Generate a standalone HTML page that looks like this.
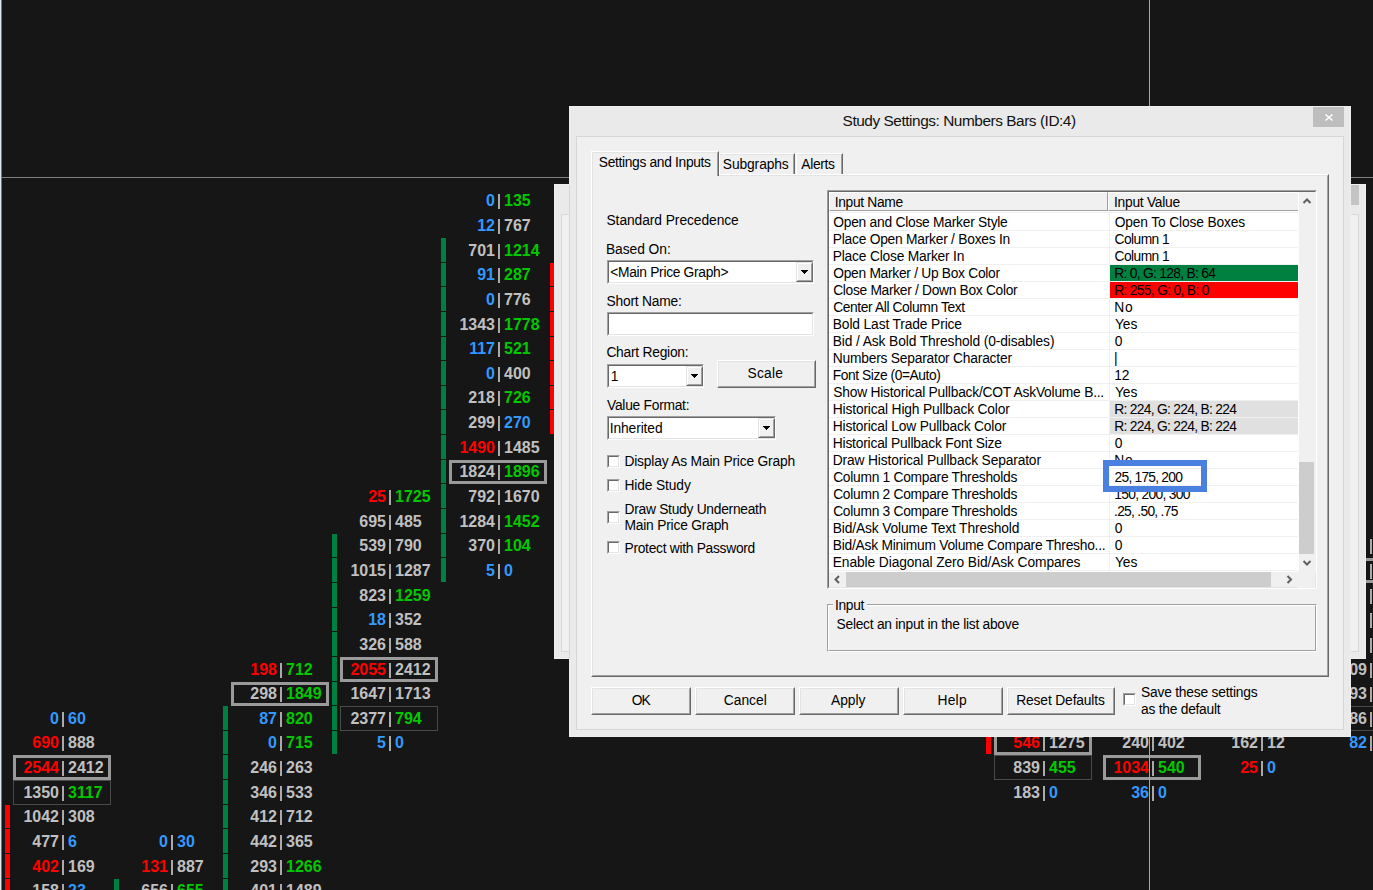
<!DOCTYPE html><html><head><meta charset="utf-8"><style>
*{margin:0;padding:0;box-sizing:border-box}
html,body{width:1373px;height:890px;overflow:hidden;background:#161616}
body{position:relative;font-family:"Liberation Sans",sans-serif}
div{position:absolute}
.t{white-space:pre;line-height:16px}
.n{font:bold 16px/16px "Liberation Sans",sans-serif;white-space:pre}
.L{text-align:right;width:60px}
.g{color:#c0c0c0}.r{color:#ff0000}.b{color:#3399ff}.G{color:#00c800}
.d{font-size:13px;color:#000;line-height:16px;white-space:pre}
</style></head><body>
<div style="left:0px;top:0px;width:1px;height:890px;background:#dfe9f3"></div>
<div style="left:1px;top:0px;width:1px;height:890px;background:#c06010"></div>
<div style="left:2px;top:177px;width:1371px;height:1px;background:#808080"></div>
<div style="left:5px;top:805px;width:5px;height:23px;background:#ff0000"></div>
<div style="left:5px;top:829px;width:5px;height:24px;background:#ff0000"></div>
<div style="left:5px;top:854px;width:5px;height:24px;background:#ff0000"></div>
<div style="left:5px;top:879px;width:5px;height:23px;background:#ff0000"></div>
<div style="left:114px;top:879px;width:5px;height:23px;background:#008040"></div>
<div style="left:223px;top:706px;width:5px;height:24px;background:#008040"></div>
<div style="left:223px;top:731px;width:5px;height:23px;background:#008040"></div>
<div style="left:223px;top:755px;width:5px;height:24px;background:#008040"></div>
<div style="left:223px;top:780px;width:5px;height:24px;background:#008040"></div>
<div style="left:223px;top:805px;width:5px;height:23px;background:#008040"></div>
<div style="left:223px;top:829px;width:5px;height:24px;background:#008040"></div>
<div style="left:223px;top:854px;width:5px;height:24px;background:#008040"></div>
<div style="left:223px;top:879px;width:5px;height:23px;background:#008040"></div>
<div style="left:332px;top:534px;width:5px;height:23px;background:#008040"></div>
<div style="left:332px;top:558px;width:5px;height:24px;background:#008040"></div>
<div style="left:332px;top:583px;width:5px;height:24px;background:#008040"></div>
<div style="left:332px;top:608px;width:5px;height:23px;background:#008040"></div>
<div style="left:332px;top:632px;width:5px;height:24px;background:#008040"></div>
<div style="left:332px;top:657px;width:5px;height:24px;background:#008040"></div>
<div style="left:332px;top:682px;width:5px;height:23px;background:#008040"></div>
<div style="left:332px;top:706px;width:5px;height:24px;background:#008040"></div>
<div style="left:332px;top:731px;width:5px;height:23px;background:#008040"></div>
<div style="left:441px;top:238px;width:5px;height:24px;background:#008040"></div>
<div style="left:441px;top:263px;width:5px;height:23px;background:#008040"></div>
<div style="left:441px;top:287px;width:5px;height:24px;background:#008040"></div>
<div style="left:441px;top:312px;width:5px;height:24px;background:#008040"></div>
<div style="left:441px;top:337px;width:5px;height:23px;background:#008040"></div>
<div style="left:441px;top:361px;width:5px;height:24px;background:#008040"></div>
<div style="left:441px;top:386px;width:5px;height:23px;background:#008040"></div>
<div style="left:441px;top:410px;width:5px;height:24px;background:#008040"></div>
<div style="left:441px;top:435px;width:5px;height:24px;background:#008040"></div>
<div style="left:441px;top:460px;width:5px;height:23px;background:#008040"></div>
<div style="left:441px;top:484px;width:5px;height:24px;background:#008040"></div>
<div style="left:441px;top:509px;width:5px;height:24px;background:#008040"></div>
<div style="left:441px;top:534px;width:5px;height:23px;background:#008040"></div>
<div style="left:441px;top:558px;width:5px;height:24px;background:#008040"></div>
<div style="left:550px;top:263px;width:5px;height:23px;background:#ff0000"></div>
<div style="left:550px;top:287px;width:5px;height:24px;background:#ff0000"></div>
<div style="left:550px;top:312px;width:5px;height:24px;background:#ff0000"></div>
<div style="left:550px;top:337px;width:5px;height:23px;background:#ff0000"></div>
<div style="left:550px;top:361px;width:5px;height:24px;background:#ff0000"></div>
<div style="left:550px;top:386px;width:5px;height:23px;background:#ff0000"></div>
<div style="left:550px;top:410px;width:5px;height:24px;background:#ff0000"></div>
<div style="left:986px;top:632px;width:5px;height:24px;background:#ff0000"></div>
<div style="left:986px;top:657px;width:5px;height:24px;background:#ff0000"></div>
<div style="left:986px;top:682px;width:5px;height:23px;background:#ff0000"></div>
<div style="left:986px;top:706px;width:5px;height:24px;background:#ff0000"></div>
<div style="left:986px;top:731px;width:5px;height:23px;background:#ff0000"></div>
<div style="left:13px;top:780px;width:98px;height:25px;border:1px solid #4a4a4a"></div>
<div style="left:340px;top:706px;width:98px;height:25px;border:1px solid #4a4a4a"></div>
<div style="left:994px;top:755px;width:98px;height:25px;border:1px solid #4a4a4a"></div>
<div style="left:1321px;top:706px;width:98px;height:25px;border:1px solid #4a4a4a"></div>
<div style="left:13px;top:755px;width:98px;height:25px;border:3px solid #9a9a9a"></div>
<div style="left:231px;top:682px;width:98px;height:24px;border:3px solid #9a9a9a"></div>
<div style="left:340px;top:657px;width:98px;height:25px;border:3px solid #9a9a9a"></div>
<div style="left:449px;top:460px;width:98px;height:24px;border:3px solid #9a9a9a"></div>
<div style="left:994px;top:731px;width:98px;height:24px;border:3px solid #9a9a9a"></div>
<div style="left:1103px;top:755px;width:98px;height:25px;border:3px solid #9a9a9a"></div>
<div style="left:1321px;top:558px;width:98px;height:25px;border:3px solid #9a9a9a"></div>
<div class="n L b" style="left:-1px;top:711px">0</div>
<div style="left:62px;top:712px;width:2px;height:15px;background:#aaaaaa"></div>
<div class="n b" style="left:68px;top:711px">60</div>
<div class="n L r" style="left:-1px;top:735px">690</div>
<div style="left:62px;top:736px;width:2px;height:15px;background:#aaaaaa"></div>
<div class="n g" style="left:68px;top:735px">888</div>
<div class="n L r" style="left:-1px;top:760px">2544</div>
<div style="left:62px;top:761px;width:2px;height:15px;background:#aaaaaa"></div>
<div class="n g" style="left:68px;top:760px">2412</div>
<div class="n L g" style="left:-1px;top:785px">1350</div>
<div style="left:62px;top:786px;width:2px;height:15px;background:#aaaaaa"></div>
<div class="n G" style="left:68px;top:785px">3117</div>
<div class="n L g" style="left:-1px;top:809px">1042</div>
<div style="left:62px;top:810px;width:2px;height:15px;background:#aaaaaa"></div>
<div class="n g" style="left:68px;top:809px">308</div>
<div class="n L g" style="left:-1px;top:834px">477</div>
<div style="left:62px;top:835px;width:2px;height:15px;background:#aaaaaa"></div>
<div class="n b" style="left:68px;top:834px">6</div>
<div class="n L r" style="left:-1px;top:859px">402</div>
<div style="left:62px;top:860px;width:2px;height:15px;background:#aaaaaa"></div>
<div class="n g" style="left:68px;top:859px">169</div>
<div class="n L g" style="left:-1px;top:883px">158</div>
<div style="left:62px;top:884px;width:2px;height:15px;background:#aaaaaa"></div>
<div class="n b" style="left:68px;top:883px">23</div>
<div class="n L b" style="left:108px;top:834px">0</div>
<div style="left:171px;top:835px;width:2px;height:15px;background:#aaaaaa"></div>
<div class="n b" style="left:177px;top:834px">30</div>
<div class="n L r" style="left:108px;top:859px">131</div>
<div style="left:171px;top:860px;width:2px;height:15px;background:#aaaaaa"></div>
<div class="n g" style="left:177px;top:859px">887</div>
<div class="n L g" style="left:108px;top:883px">656</div>
<div style="left:171px;top:884px;width:2px;height:15px;background:#aaaaaa"></div>
<div class="n G" style="left:177px;top:883px">655</div>
<div class="n L r" style="left:217px;top:662px">198</div>
<div style="left:280px;top:663px;width:2px;height:15px;background:#aaaaaa"></div>
<div class="n G" style="left:286px;top:662px">712</div>
<div class="n L g" style="left:217px;top:686px">298</div>
<div style="left:280px;top:687px;width:2px;height:15px;background:#aaaaaa"></div>
<div class="n G" style="left:286px;top:686px">1849</div>
<div class="n L b" style="left:217px;top:711px">87</div>
<div style="left:280px;top:712px;width:2px;height:15px;background:#aaaaaa"></div>
<div class="n G" style="left:286px;top:711px">820</div>
<div class="n L b" style="left:217px;top:735px">0</div>
<div style="left:280px;top:736px;width:2px;height:15px;background:#aaaaaa"></div>
<div class="n G" style="left:286px;top:735px">715</div>
<div class="n L g" style="left:217px;top:760px">246</div>
<div style="left:280px;top:761px;width:2px;height:15px;background:#aaaaaa"></div>
<div class="n g" style="left:286px;top:760px">263</div>
<div class="n L g" style="left:217px;top:785px">346</div>
<div style="left:280px;top:786px;width:2px;height:15px;background:#aaaaaa"></div>
<div class="n g" style="left:286px;top:785px">533</div>
<div class="n L g" style="left:217px;top:809px">412</div>
<div style="left:280px;top:810px;width:2px;height:15px;background:#aaaaaa"></div>
<div class="n g" style="left:286px;top:809px">712</div>
<div class="n L g" style="left:217px;top:834px">442</div>
<div style="left:280px;top:835px;width:2px;height:15px;background:#aaaaaa"></div>
<div class="n g" style="left:286px;top:834px">365</div>
<div class="n L g" style="left:217px;top:859px">293</div>
<div style="left:280px;top:860px;width:2px;height:15px;background:#aaaaaa"></div>
<div class="n G" style="left:286px;top:859px">1266</div>
<div class="n L g" style="left:217px;top:883px">401</div>
<div style="left:280px;top:884px;width:2px;height:15px;background:#aaaaaa"></div>
<div class="n g" style="left:286px;top:883px">1489</div>
<div class="n L r" style="left:326px;top:489px">25</div>
<div style="left:389px;top:490px;width:2px;height:15px;background:#aaaaaa"></div>
<div class="n G" style="left:395px;top:489px">1725</div>
<div class="n L g" style="left:326px;top:514px">695</div>
<div style="left:389px;top:515px;width:2px;height:15px;background:#aaaaaa"></div>
<div class="n g" style="left:395px;top:514px">485</div>
<div class="n L g" style="left:326px;top:538px">539</div>
<div style="left:389px;top:539px;width:2px;height:15px;background:#aaaaaa"></div>
<div class="n g" style="left:395px;top:538px">790</div>
<div class="n L g" style="left:326px;top:563px">1015</div>
<div style="left:389px;top:564px;width:2px;height:15px;background:#aaaaaa"></div>
<div class="n g" style="left:395px;top:563px">1287</div>
<div class="n L g" style="left:326px;top:588px">823</div>
<div style="left:389px;top:589px;width:2px;height:15px;background:#aaaaaa"></div>
<div class="n G" style="left:395px;top:588px">1259</div>
<div class="n L b" style="left:326px;top:612px">18</div>
<div style="left:389px;top:613px;width:2px;height:15px;background:#aaaaaa"></div>
<div class="n g" style="left:395px;top:612px">352</div>
<div class="n L g" style="left:326px;top:637px">326</div>
<div style="left:389px;top:638px;width:2px;height:15px;background:#aaaaaa"></div>
<div class="n g" style="left:395px;top:637px">588</div>
<div class="n L r" style="left:326px;top:662px">2055</div>
<div style="left:389px;top:663px;width:2px;height:15px;background:#aaaaaa"></div>
<div class="n g" style="left:395px;top:662px">2412</div>
<div class="n L g" style="left:326px;top:686px">1647</div>
<div style="left:389px;top:687px;width:2px;height:15px;background:#aaaaaa"></div>
<div class="n g" style="left:395px;top:686px">1713</div>
<div class="n L g" style="left:326px;top:711px">2377</div>
<div style="left:389px;top:712px;width:2px;height:15px;background:#aaaaaa"></div>
<div class="n G" style="left:395px;top:711px">794</div>
<div class="n L b" style="left:326px;top:735px">5</div>
<div style="left:389px;top:736px;width:2px;height:15px;background:#aaaaaa"></div>
<div class="n b" style="left:395px;top:735px">0</div>
<div class="n L b" style="left:435px;top:193px">0</div>
<div style="left:498px;top:194px;width:2px;height:15px;background:#aaaaaa"></div>
<div class="n G" style="left:504px;top:193px">135</div>
<div class="n L b" style="left:435px;top:218px">12</div>
<div style="left:498px;top:219px;width:2px;height:15px;background:#aaaaaa"></div>
<div class="n g" style="left:504px;top:218px">767</div>
<div class="n L g" style="left:435px;top:243px">701</div>
<div style="left:498px;top:244px;width:2px;height:15px;background:#aaaaaa"></div>
<div class="n G" style="left:504px;top:243px">1214</div>
<div class="n L b" style="left:435px;top:267px">91</div>
<div style="left:498px;top:268px;width:2px;height:15px;background:#aaaaaa"></div>
<div class="n G" style="left:504px;top:267px">287</div>
<div class="n L b" style="left:435px;top:292px">0</div>
<div style="left:498px;top:293px;width:2px;height:15px;background:#aaaaaa"></div>
<div class="n g" style="left:504px;top:292px">776</div>
<div class="n L g" style="left:435px;top:317px">1343</div>
<div style="left:498px;top:318px;width:2px;height:15px;background:#aaaaaa"></div>
<div class="n G" style="left:504px;top:317px">1778</div>
<div class="n L b" style="left:435px;top:341px">117</div>
<div style="left:498px;top:342px;width:2px;height:15px;background:#aaaaaa"></div>
<div class="n G" style="left:504px;top:341px">521</div>
<div class="n L b" style="left:435px;top:366px">0</div>
<div style="left:498px;top:367px;width:2px;height:15px;background:#aaaaaa"></div>
<div class="n g" style="left:504px;top:366px">400</div>
<div class="n L g" style="left:435px;top:390px">218</div>
<div style="left:498px;top:391px;width:2px;height:15px;background:#aaaaaa"></div>
<div class="n G" style="left:504px;top:390px">726</div>
<div class="n L g" style="left:435px;top:415px">299</div>
<div style="left:498px;top:416px;width:2px;height:15px;background:#aaaaaa"></div>
<div class="n b" style="left:504px;top:415px">270</div>
<div class="n L r" style="left:435px;top:440px">1490</div>
<div style="left:498px;top:441px;width:2px;height:15px;background:#aaaaaa"></div>
<div class="n g" style="left:504px;top:440px">1485</div>
<div class="n L g" style="left:435px;top:464px">1824</div>
<div style="left:498px;top:465px;width:2px;height:15px;background:#aaaaaa"></div>
<div class="n G" style="left:504px;top:464px">1896</div>
<div class="n L g" style="left:435px;top:489px">792</div>
<div style="left:498px;top:490px;width:2px;height:15px;background:#aaaaaa"></div>
<div class="n g" style="left:504px;top:489px">1670</div>
<div class="n L g" style="left:435px;top:514px">1284</div>
<div style="left:498px;top:515px;width:2px;height:15px;background:#aaaaaa"></div>
<div class="n G" style="left:504px;top:514px">1452</div>
<div class="n L g" style="left:435px;top:538px">370</div>
<div style="left:498px;top:539px;width:2px;height:15px;background:#aaaaaa"></div>
<div class="n G" style="left:504px;top:538px">104</div>
<div class="n L b" style="left:435px;top:563px">5</div>
<div style="left:498px;top:564px;width:2px;height:15px;background:#aaaaaa"></div>
<div class="n b" style="left:504px;top:563px">0</div>
<div class="n L r" style="left:980px;top:735px">546</div>
<div style="left:1043px;top:736px;width:2px;height:15px;background:#aaaaaa"></div>
<div class="n g" style="left:1049px;top:735px">1275</div>
<div class="n L g" style="left:980px;top:760px">839</div>
<div style="left:1043px;top:761px;width:2px;height:15px;background:#aaaaaa"></div>
<div class="n G" style="left:1049px;top:760px">455</div>
<div class="n L g" style="left:980px;top:785px">183</div>
<div style="left:1043px;top:786px;width:2px;height:15px;background:#aaaaaa"></div>
<div class="n b" style="left:1049px;top:785px">0</div>
<div class="n L g" style="left:1089px;top:735px">240</div>
<div style="left:1152px;top:736px;width:2px;height:15px;background:#aaaaaa"></div>
<div class="n g" style="left:1158px;top:735px">402</div>
<div class="n L r" style="left:1089px;top:760px">1034</div>
<div style="left:1152px;top:761px;width:2px;height:15px;background:#aaaaaa"></div>
<div class="n G" style="left:1158px;top:760px">540</div>
<div class="n L b" style="left:1089px;top:785px">36</div>
<div style="left:1152px;top:786px;width:2px;height:15px;background:#aaaaaa"></div>
<div class="n b" style="left:1158px;top:785px">0</div>
<div class="n L g" style="left:1198px;top:735px">162</div>
<div style="left:1261px;top:736px;width:2px;height:15px;background:#aaaaaa"></div>
<div class="n g" style="left:1267px;top:735px">12</div>
<div class="n L r" style="left:1198px;top:760px">25</div>
<div style="left:1261px;top:761px;width:2px;height:15px;background:#aaaaaa"></div>
<div class="n b" style="left:1267px;top:760px">0</div>
<div class="n L g" style="left:1307px;top:538px"></div>
<div style="left:1370px;top:539px;width:2px;height:15px;background:#aaaaaa"></div>
<div class="n L g" style="left:1307px;top:563px"></div>
<div style="left:1370px;top:564px;width:2px;height:15px;background:#aaaaaa"></div>
<div class="n L g" style="left:1307px;top:588px"></div>
<div style="left:1370px;top:589px;width:2px;height:15px;background:#aaaaaa"></div>
<div class="n L g" style="left:1307px;top:612px"></div>
<div style="left:1370px;top:613px;width:2px;height:15px;background:#aaaaaa"></div>
<div class="n L g" style="left:1307px;top:637px"></div>
<div style="left:1370px;top:638px;width:2px;height:15px;background:#aaaaaa"></div>
<div class="n L g" style="left:1307px;top:662px">09</div>
<div style="left:1370px;top:663px;width:2px;height:15px;background:#aaaaaa"></div>
<div class="n L g" style="left:1307px;top:686px">93</div>
<div style="left:1370px;top:687px;width:2px;height:15px;background:#aaaaaa"></div>
<div class="n L g" style="left:1307px;top:711px">86</div>
<div style="left:1370px;top:712px;width:2px;height:15px;background:#aaaaaa"></div>
<div class="n L b" style="left:1307px;top:735px">82</div>
<div style="left:1370px;top:736px;width:2px;height:15px;background:#aaaaaa"></div>
<div style="left:1149px;top:0px;width:1px;height:890px;background:#a8a8a8"></div>
<div style="left:554px;top:184px;width:812px;height:475px;background:#eaeaea;border:1px solid #efefef"></div>
<div style="left:561px;top:214px;width:798px;height:438px;background:#f0f0f0;border:1px solid #d9d9d9"></div>
<div style="left:1351px;top:185px;width:8px;height:20px;background:#c4c4c4"></div>
<div style="left:569px;top:106px;width:782px;height:631px;background:#eaeaea;border:1px solid #eeeeee"></div>
<div style="left:576px;top:136px;width:768px;height:594px;background:#f0f0f0;border:1px solid #d6d6d6"></div>
<div style="left:569px;top:185px;width:1px;height:474px;background:#d6d6d6"></div>
<div style="left:1313px;top:107px;width:31px;height:20px;background:#bebebe"></div>
<svg style="position:absolute;left:1313px;top:107px" width="31" height="20"><path d="M12.5 7.5L19.5 13.5M19.5 7.5L12.5 13.5" stroke="#fff" stroke-width="1.6"/></svg>
<div class="d" style="left:842.60px;top:113px;font-size:15.4px;letter-spacing:-0.453px;color:#111">Study Settings: Numbers Bars (ID:4)</div>
<div style="left:591px;top:174px;width:738px;height:503px;border-top:1px solid #fff;border-left:1px solid #fff;border-bottom:1px solid #696969;border-right:1px solid #696969"></div>
<div style="left:592px;top:175px;width:736px;height:501px;border-left:1px solid #e3e3e3;border-top:1px solid #e3e3e3;border-bottom:1px solid #a0a0a0;border-right:1px solid #a0a0a0"></div>
<div style="left:719px;top:153px;width:76px;height:22px;background:#f0f0f0;border-top:1px solid #fff;border-left:1px solid #fff;border-right:1px solid #696969"></div>
<div style="left:720px;top:154px;width:74px;height:21px;border-top:1px solid #e3e3e3;border-right:1px solid #a0a0a0"></div>
<div style="left:796px;top:153px;width:47px;height:22px;background:#f0f0f0;border-top:1px solid #fff;border-left:1px solid #fff;border-right:1px solid #696969"></div>
<div style="left:797px;top:154px;width:45px;height:21px;border-top:1px solid #e3e3e3;border-right:1px solid #a0a0a0"></div>
<div style="left:719px;top:174px;width:124px;height:1px;background:#fff"></div>
<div style="left:591px;top:151px;width:128px;height:25px;background:#f0f0f0;border-top:1px solid #fff;border-left:1px solid #fff;border-right:1px solid #696969"></div>
<div style="left:592px;top:152px;width:126px;height:24px;border-top:1px solid #e3e3e3;border-left:1px solid #e3e3e3;border-right:1px solid #a0a0a0"></div>
<div class="d" style="left:598.77px;top:155px;font-size:13.8px;letter-spacing:-0.329px;">Settings and Inputs</div>
<div class="d" style="left:722.77px;top:157px;font-size:13.8px;letter-spacing:-0.091px;">Subgraphs</div>
<div class="d" style="left:801.27px;top:157px;font-size:13.8px;letter-spacing:-0.310px;">Alerts</div>
<div class="d" style="left:606.47px;top:213px;font-size:13.8px;letter-spacing:-0.064px;">Standard Precedence</div>
<div class="d" style="left:605.97px;top:242px;font-size:13.8px;letter-spacing:-0.052px;">Based On:</div>
<div style="left:607px;top:260px;width:207px;height:24px;background:#fff;border-top:1px solid #a0a0a0;border-left:1px solid #a0a0a0;border-bottom:1px solid #fff;border-right:1px solid #fff"></div>
<div style="left:608px;top:261px;width:205px;height:22px;border-top:1px solid #696969;border-left:1px solid #696969;border-bottom:1px solid #e3e3e3;border-right:1px solid #e3e3e3"></div>
<div style="left:796px;top:262px;width:17px;height:20px;background:#f0f0f0;border-top:1px solid #e3e3e3;border-left:1px solid #e3e3e3;border-bottom:1px solid #696969;border-right:1px solid #696969"></div>
<div style="left:797px;top:263px;width:15px;height:18px;border-top:1px solid #fff;border-left:1px solid #fff;border-bottom:1px solid #a0a0a0;border-right:1px solid #a0a0a0"></div>
<div style="left:801px;top:270px;width:7px;height:1px;background:#000"></div>
<div style="left:802px;top:271px;width:5px;height:1px;background:#000"></div>
<div style="left:803px;top:272px;width:3px;height:1px;background:#000"></div>
<div style="left:804px;top:273px;width:1px;height:1px;background:#000"></div>
<div class="d" style="left:610.32px;top:265px;font-size:13.8px;letter-spacing:-0.314px;">&lt;Main Price Graph&gt;</div>
<div class="d" style="left:606.47px;top:294px;font-size:13.8px;letter-spacing:-0.208px;">Short Name:</div>
<div style="left:607px;top:312px;width:207px;height:24px;background:#fff;border-top:1px solid #a0a0a0;border-left:1px solid #a0a0a0;border-bottom:1px solid #fff;border-right:1px solid #fff"></div>
<div style="left:608px;top:313px;width:205px;height:22px;border-top:1px solid #696969;border-left:1px solid #696969;border-bottom:1px solid #e3e3e3;border-right:1px solid #e3e3e3"></div>
<div class="d" style="left:606.40px;top:345px;font-size:13.8px;letter-spacing:-0.240px;">Chart Region:</div>
<div style="left:607px;top:364px;width:97px;height:24px;background:#fff;border-top:1px solid #a0a0a0;border-left:1px solid #a0a0a0;border-bottom:1px solid #fff;border-right:1px solid #fff"></div>
<div style="left:608px;top:365px;width:95px;height:22px;border-top:1px solid #696969;border-left:1px solid #696969;border-bottom:1px solid #e3e3e3;border-right:1px solid #e3e3e3"></div>
<div style="left:686px;top:366px;width:17px;height:20px;background:#f0f0f0;border-top:1px solid #e3e3e3;border-left:1px solid #e3e3e3;border-bottom:1px solid #696969;border-right:1px solid #696969"></div>
<div style="left:687px;top:367px;width:15px;height:18px;border-top:1px solid #fff;border-left:1px solid #fff;border-bottom:1px solid #a0a0a0;border-right:1px solid #a0a0a0"></div>
<div style="left:691px;top:374px;width:7px;height:1px;background:#000"></div>
<div style="left:692px;top:375px;width:5px;height:1px;background:#000"></div>
<div style="left:693px;top:376px;width:3px;height:1px;background:#000"></div>
<div style="left:694px;top:377px;width:1px;height:1px;background:#000"></div>
<div class="d" style="left:610.85px;top:369px;font-size:13.8px;letter-spacing:-0.200px;">1</div>
<div style="left:717px;top:360px;width:99px;height:28px;background:#f0f0f0;border-top:1px solid #fff;border-left:1px solid #fff;border-bottom:1px solid #696969;border-right:1px solid #696969"></div>
<div style="left:718px;top:361px;width:97px;height:26px;border-top:1px solid #e3e3e3;border-left:1px solid #e3e3e3;border-bottom:1px solid #a0a0a0;border-right:1px solid #a0a0a0"></div>
<div class="d" style="left:747.57px;top:366px;font-size:13.8px;letter-spacing:0.205px;">Scale</div>
<div class="d" style="left:607.04px;top:398px;font-size:13.8px;letter-spacing:-0.262px;">Value Format:</div>
<div style="left:607px;top:416px;width:169px;height:24px;background:#fff;border-top:1px solid #a0a0a0;border-left:1px solid #a0a0a0;border-bottom:1px solid #fff;border-right:1px solid #fff"></div>
<div style="left:608px;top:417px;width:167px;height:22px;border-top:1px solid #696969;border-left:1px solid #696969;border-bottom:1px solid #e3e3e3;border-right:1px solid #e3e3e3"></div>
<div style="left:758px;top:418px;width:17px;height:20px;background:#f0f0f0;border-top:1px solid #e3e3e3;border-left:1px solid #e3e3e3;border-bottom:1px solid #696969;border-right:1px solid #696969"></div>
<div style="left:759px;top:419px;width:15px;height:18px;border-top:1px solid #fff;border-left:1px solid #fff;border-bottom:1px solid #a0a0a0;border-right:1px solid #a0a0a0"></div>
<div style="left:763px;top:426px;width:7px;height:1px;background:#000"></div>
<div style="left:764px;top:427px;width:5px;height:1px;background:#000"></div>
<div style="left:765px;top:428px;width:3px;height:1px;background:#000"></div>
<div style="left:766px;top:429px;width:1px;height:1px;background:#000"></div>
<div class="d" style="left:609.73px;top:421px;font-size:13.8px;letter-spacing:-0.105px;">Inherited</div>
<div style="left:607px;top:455px;width:13px;height:13px;background:#fff;border-top:1px solid #a0a0a0;border-left:1px solid #a0a0a0;border-bottom:1px solid #fff;border-right:1px solid #fff"></div>
<div style="left:608px;top:456px;width:11px;height:11px;border-top:1px solid #696969;border-left:1px solid #696969;border-bottom:1px solid #e3e3e3;border-right:1px solid #e3e3e3"></div>
<div class="d" style="left:624.47px;top:454px;font-size:13.8px;letter-spacing:-0.191px;">Display As Main Price Graph</div>
<div style="left:607px;top:479px;width:13px;height:13px;background:#fff;border-top:1px solid #a0a0a0;border-left:1px solid #a0a0a0;border-bottom:1px solid #fff;border-right:1px solid #fff"></div>
<div style="left:608px;top:480px;width:11px;height:11px;border-top:1px solid #696969;border-left:1px solid #696969;border-bottom:1px solid #e3e3e3;border-right:1px solid #e3e3e3"></div>
<div class="d" style="left:624.47px;top:478px;font-size:13.8px;letter-spacing:-0.127px;">Hide Study</div>
<div style="left:607px;top:511px;width:13px;height:13px;background:#fff;border-top:1px solid #a0a0a0;border-left:1px solid #a0a0a0;border-bottom:1px solid #fff;border-right:1px solid #fff"></div>
<div style="left:608px;top:512px;width:11px;height:11px;border-top:1px solid #696969;border-left:1px solid #696969;border-bottom:1px solid #e3e3e3;border-right:1px solid #e3e3e3"></div>
<div class="d" style="left:624.47px;top:502px;font-size:13.8px;letter-spacing:-0.268px;">Draw Study Underneath</div>
<div class="d" style="left:624.47px;top:518px;font-size:13.8px;letter-spacing:-0.203px;">Main Price Graph</div>
<div style="left:607px;top:541px;width:13px;height:13px;background:#fff;border-top:1px solid #a0a0a0;border-left:1px solid #a0a0a0;border-bottom:1px solid #fff;border-right:1px solid #fff"></div>
<div style="left:608px;top:542px;width:11px;height:11px;border-top:1px solid #696969;border-left:1px solid #696969;border-bottom:1px solid #e3e3e3;border-right:1px solid #e3e3e3"></div>
<div class="d" style="left:624.47px;top:541px;font-size:13.8px;letter-spacing:-0.285px;">Protect with Password</div>
<div style="left:591px;top:687px;width:100px;height:28px;background:#f0f0f0;border-top:1px solid #fff;border-left:1px solid #fff;border-bottom:1px solid #696969;border-right:1px solid #696969"></div>
<div style="left:592px;top:688px;width:98px;height:26px;border-top:1px solid #e3e3e3;border-left:1px solid #e3e3e3;border-bottom:1px solid #a0a0a0;border-right:1px solid #a0a0a0"></div>
<div class="d" style="left:631.75px;top:693px;font-size:13.8px;letter-spacing:-0.930px;">OK</div>
<div style="left:695px;top:687px;width:100px;height:28px;background:#f0f0f0;border-top:1px solid #fff;border-left:1px solid #fff;border-bottom:1px solid #696969;border-right:1px solid #696969"></div>
<div style="left:696px;top:688px;width:98px;height:26px;border-top:1px solid #e3e3e3;border-left:1px solid #e3e3e3;border-bottom:1px solid #a0a0a0;border-right:1px solid #a0a0a0"></div>
<div class="d" style="left:723.80px;top:693px;font-size:13.8px;letter-spacing:-0.007px;">Cancel</div>
<div style="left:799px;top:687px;width:100px;height:28px;background:#f0f0f0;border-top:1px solid #fff;border-left:1px solid #fff;border-bottom:1px solid #696969;border-right:1px solid #696969"></div>
<div style="left:800px;top:688px;width:98px;height:26px;border-top:1px solid #e3e3e3;border-left:1px solid #e3e3e3;border-bottom:1px solid #a0a0a0;border-right:1px solid #a0a0a0"></div>
<div class="d" style="left:830.97px;top:693px;font-size:13.8px;letter-spacing:0.008px;">Apply</div>
<div style="left:903px;top:687px;width:100px;height:28px;background:#f0f0f0;border-top:1px solid #fff;border-left:1px solid #fff;border-bottom:1px solid #696969;border-right:1px solid #696969"></div>
<div style="left:904px;top:688px;width:98px;height:26px;border-top:1px solid #e3e3e3;border-left:1px solid #e3e3e3;border-bottom:1px solid #a0a0a0;border-right:1px solid #a0a0a0"></div>
<div class="d" style="left:937.47px;top:693px;font-size:13.8px;letter-spacing:0.243px;">Help</div>
<div style="left:1007px;top:687px;width:108px;height:28px;background:#f0f0f0;border-top:1px solid #fff;border-left:1px solid #fff;border-bottom:1px solid #696969;border-right:1px solid #696969"></div>
<div style="left:1008px;top:688px;width:106px;height:26px;border-top:1px solid #e3e3e3;border-left:1px solid #e3e3e3;border-bottom:1px solid #a0a0a0;border-right:1px solid #a0a0a0"></div>
<div class="d" style="left:1016.27px;top:693px;font-size:13.8px;letter-spacing:-0.144px;">Reset Defaults</div>
<div style="left:1123px;top:693px;width:13px;height:13px;background:#fff;border-top:1px solid #a0a0a0;border-left:1px solid #a0a0a0;border-bottom:1px solid #fff;border-right:1px solid #fff"></div>
<div style="left:1124px;top:694px;width:11px;height:11px;border-top:1px solid #696969;border-left:1px solid #696969;border-bottom:1px solid #e3e3e3;border-right:1px solid #e3e3e3"></div>
<div class="d" style="left:1141.07px;top:685px;font-size:13.8px;letter-spacing:-0.217px;">Save these settings</div>
<div class="d" style="left:1141.11px;top:702px;font-size:13.8px;letter-spacing:-0.259px;">as the default</div>
<div style="left:827px;top:190px;width:490px;height:399px;background:#fff;border-top:1px solid #a0a0a0;border-left:1px solid #a0a0a0;border-bottom:1px solid #fff;border-right:1px solid #fff"></div>
<div style="left:828px;top:191px;width:488px;height:397px;border-top:1px solid #696969;border-left:1px solid #696969;border-bottom:1px solid #e3e3e3;border-right:1px solid #e3e3e3"></div>
<div style="left:829px;top:192px;width:279px;height:19px;background:#f0f0f0;border-top:1px solid #fff;border-left:1px solid #fff;border-right:1px solid #a0a0a0;border-bottom:1px solid #a0a0a0"></div>
<div style="left:1108px;top:192px;width:190px;height:19px;background:#f0f0f0;border-top:1px solid #fff;border-left:1px solid #fff;border-bottom:1px solid #a0a0a0"></div>
<div style="left:829px;top:212px;width:469px;height:1px;background:#f0f0f0"></div>
<div class="d" style="left:834.73px;top:195px;font-size:13.8px;letter-spacing:-0.328px;">Input Name</div>
<div class="d" style="left:1114.03px;top:195px;font-size:13.8px;letter-spacing:-0.264px;">Input Value</div>
<div style="left:829px;top:230px;width:469px;height:1px;background:#f0f0f0"></div>
<div class="d" style="left:833.25px;top:215px;font-size:13.8px;letter-spacing:-0.248px;">Open and Close Marker Style</div>
<div class="d" style="left:1114.65px;top:215px;font-size:13.8px;letter-spacing:-0.147px;">Open To Close Boxes</div>
<div style="left:829px;top:247px;width:469px;height:1px;background:#f0f0f0"></div>
<div class="d" style="left:832.77px;top:232px;font-size:13.8px;letter-spacing:-0.243px;">Place Open Marker / Boxes In</div>
<div class="d" style="left:1114.60px;top:232px;font-size:13.8px;letter-spacing:-0.569px;">Column 1</div>
<div style="left:829px;top:264px;width:469px;height:1px;background:#f0f0f0"></div>
<div class="d" style="left:832.77px;top:249px;font-size:13.8px;letter-spacing:-0.206px;">Place Close Marker In</div>
<div class="d" style="left:1114.60px;top:249px;font-size:13.8px;letter-spacing:-0.569px;">Column 1</div>
<div style="left:1110px;top:265px;width:188px;height:16px;background:#008040"></div>
<div style="left:829px;top:281px;width:469px;height:1px;background:#f0f0f0"></div>
<div class="d" style="left:833.25px;top:266px;font-size:13.8px;letter-spacing:-0.289px;">Open Marker / Up Box Color</div>
<div class="d" style="left:1114.17px;top:266px;font-size:13.8px;letter-spacing:-0.698px;">R: 0, G: 128, B: 64</div>
<div style="left:1110px;top:282px;width:188px;height:16px;background:#ff0000"></div>
<div style="left:829px;top:298px;width:469px;height:1px;background:#f0f0f0"></div>
<div class="d" style="left:833.20px;top:283px;font-size:13.8px;letter-spacing:-0.315px;">Close Marker / Down Box Color</div>
<div class="d" style="left:1114.17px;top:283px;font-size:13.8px;letter-spacing:-0.668px;">R: 255, G: 0, B: 0</div>
<div style="left:829px;top:315px;width:469px;height:1px;background:#f0f0f0"></div>
<div class="d" style="left:833.20px;top:300px;font-size:13.8px;letter-spacing:-0.393px;">Center All Column Text</div>
<div class="d" style="left:1114.17px;top:300px;font-size:13.8px;letter-spacing:0.771px;">No</div>
<div style="left:829px;top:332px;width:469px;height:1px;background:#f0f0f0"></div>
<div class="d" style="left:832.77px;top:317px;font-size:13.8px;letter-spacing:-0.133px;">Bold Last Trade Price</div>
<div class="d" style="left:1115.00px;top:317px;font-size:13.8px;letter-spacing:-0.089px;">Yes</div>
<div style="left:829px;top:349px;width:469px;height:1px;background:#f0f0f0"></div>
<div class="d" style="left:832.77px;top:334px;font-size:13.8px;letter-spacing:-0.118px;">Bid / Ask Bold Threshold (0-disables)</div>
<div class="d" style="left:1114.76px;top:334px;font-size:13.8px;letter-spacing:-0.397px;">0</div>
<div style="left:829px;top:366px;width:469px;height:1px;background:#f0f0f0"></div>
<div class="d" style="left:832.77px;top:351px;font-size:13.8px;letter-spacing:-0.215px;">Numbers Separator Character</div>
<div class="d" style="left:1114.07px;top:351px;font-size:13.8px;letter-spacing:-0.200px;">|</div>
<div style="left:829px;top:383px;width:469px;height:1px;background:#f0f0f0"></div>
<div class="d" style="left:832.77px;top:368px;font-size:13.8px;letter-spacing:-0.432px;">Font Size (0=Auto)</div>
<div class="d" style="left:1114.25px;top:368px;font-size:13.8px;letter-spacing:-0.200px;">12</div>
<div style="left:829px;top:400px;width:469px;height:1px;background:#f0f0f0"></div>
<div class="d" style="left:833.27px;top:385px;font-size:13.8px;letter-spacing:-0.225px;">Show Historical Pullback/COT AskVolume B...</div>
<div class="d" style="left:1115.00px;top:385px;font-size:13.8px;letter-spacing:-0.089px;">Yes</div>
<div style="left:1110px;top:401px;width:188px;height:16px;background:#e0e0e0"></div>
<div style="left:829px;top:417px;width:469px;height:1px;background:#f0f0f0"></div>
<div class="d" style="left:832.77px;top:402px;font-size:13.8px;letter-spacing:-0.159px;">Historical High Pullback Color</div>
<div class="d" style="left:1114.17px;top:402px;font-size:13.8px;letter-spacing:-0.694px;">R: 224, G: 224, B: 224</div>
<div style="left:1110px;top:418px;width:188px;height:16px;background:#e0e0e0"></div>
<div style="left:829px;top:434px;width:469px;height:1px;background:#f0f0f0"></div>
<div class="d" style="left:832.77px;top:419px;font-size:13.8px;letter-spacing:-0.184px;">Historical Low Pullback Color</div>
<div class="d" style="left:1114.17px;top:419px;font-size:13.8px;letter-spacing:-0.694px;">R: 224, G: 224, B: 224</div>
<div style="left:829px;top:451px;width:469px;height:1px;background:#f0f0f0"></div>
<div class="d" style="left:832.77px;top:436px;font-size:13.8px;letter-spacing:-0.204px;">Historical Pullback Font Size</div>
<div class="d" style="left:1114.76px;top:436px;font-size:13.8px;letter-spacing:-0.397px;">0</div>
<div style="left:829px;top:468px;width:469px;height:1px;background:#f0f0f0"></div>
<div class="d" style="left:832.77px;top:453px;font-size:13.8px;letter-spacing:-0.150px;">Draw Historical Pullback Separator</div>
<div class="d" style="left:1114.17px;top:453px;font-size:13.8px;letter-spacing:0.771px;">No</div>
<div style="left:829px;top:485px;width:469px;height:1px;background:#f0f0f0"></div>
<div class="d" style="left:833.20px;top:470px;font-size:13.8px;letter-spacing:-0.283px;">Column 1 Compare Thresholds</div>
<div class="d" style="left:1114.61px;top:470px;font-size:13.8px;letter-spacing:-0.773px;">25, 175, 200</div>
<div style="left:829px;top:502px;width:469px;height:1px;background:#f0f0f0"></div>
<div class="d" style="left:833.20px;top:487px;font-size:13.8px;letter-spacing:-0.283px;">Column 2 Compare Thresholds</div>
<div class="d" style="left:1114.25px;top:487px;font-size:13.8px;letter-spacing:-0.693px;">150, 200, 300</div>
<div style="left:829px;top:519px;width:469px;height:1px;background:#f0f0f0"></div>
<div class="d" style="left:833.20px;top:504px;font-size:13.8px;letter-spacing:-0.283px;">Column 3 Compare Thresholds</div>
<div class="d" style="left:1114.04px;top:504px;font-size:13.8px;letter-spacing:-0.712px;">.25, .50, .75</div>
<div style="left:829px;top:536px;width:469px;height:1px;background:#f0f0f0"></div>
<div class="d" style="left:832.77px;top:521px;font-size:13.8px;letter-spacing:-0.138px;">Bid/Ask Volume Text Threshold</div>
<div class="d" style="left:1114.76px;top:521px;font-size:13.8px;letter-spacing:-0.397px;">0</div>
<div style="left:829px;top:553px;width:469px;height:1px;background:#f0f0f0"></div>
<div class="d" style="left:832.77px;top:538px;font-size:13.8px;letter-spacing:-0.247px;">Bid/Ask Minimum Volume Compare Thresho...</div>
<div class="d" style="left:1114.76px;top:538px;font-size:13.8px;letter-spacing:-0.397px;">0</div>
<div style="left:829px;top:570px;width:469px;height:1px;background:#f0f0f0"></div>
<div class="d" style="left:832.77px;top:555px;font-size:13.8px;letter-spacing:-0.105px;">Enable Diagonal Zero Bid/Ask Compares</div>
<div class="d" style="left:1115.00px;top:555px;font-size:13.8px;letter-spacing:-0.089px;">Yes</div>
<div style="left:1109px;top:213px;width:1px;height:358px;background:#f0f0f0"></div>
<div style="left:1103px;top:460px;width:104px;height:32px;border:6px solid #4a80df"></div>
<div style="left:1298px;top:192px;width:18px;height:380px;background:#f0f0f0;border-left:1px solid #fff"></div>
<div style="left:1299px;top:462px;width:15px;height:92px;background:#cdcdcd"></div>
<svg style="position:absolute;left:1299px;top:192px" width="17" height="380"><path d="M4.5 11L8 7.5L11.5 11" fill="none" stroke="#606060" stroke-width="2"/><path d="M4.5 369L8 372.5L11.5 369" fill="none" stroke="#606060" stroke-width="2"/></svg>
<div style="left:829px;top:572px;width:469px;height:15px;background:#f0f0f0"></div>
<div style="left:846px;top:572px;width:425px;height:15px;background:#cdcdcd"></div>
<div style="left:1298px;top:571px;width:17px;height:17px;background:#f0f0f0"></div>
<svg style="position:absolute;left:829px;top:572px" width="469" height="15"><path d="M10 4L6.5 7.5L10 11" fill="none" stroke="#606060" stroke-width="2"/><path d="M458.5 4L462 7.5L458.5 11" fill="none" stroke="#606060" stroke-width="2"/></svg>
<div style="left:827px;top:604px;width:490px;height:48px;border-top:1px solid #a0a0a0;border-left:1px solid #a0a0a0;border-bottom:1px solid #fff;border-right:1px solid #fff"></div>
<div style="left:828px;top:605px;width:488px;height:46px;border-top:1px solid #fff;border-left:1px solid #fff;border-bottom:1px solid #a0a0a0;border-right:1px solid #a0a0a0"></div>
<div style="left:833px;top:600px;width:34px;height:10px;background:#f0f0f0"></div>
<div class="d" style="left:835.03px;top:598px;font-size:13.8px;letter-spacing:-0.355px;">Input</div>
<div class="d" style="left:836.57px;top:617px;font-size:13.8px;letter-spacing:-0.265px;">Select an input in the list above</div>
</body></html>
